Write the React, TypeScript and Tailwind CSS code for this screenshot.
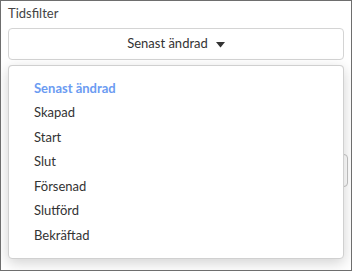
import React from 'react';

const options = ['Senast ändrad', 'Skapad', 'Start', 'Slut', 'Försenad', 'Slutförd', 'Bekräftad'];

export default function App() {
  const selected = 'Senast ändrad';

  return (
    <div className="w-[352px] h-[271px] bg-white border border-[#6e6e6e] overflow-hidden font-['Lato',sans-serif]">
      <div className="relative h-full px-[7px] pt-[4px]">
        {/* Formulär bakom menyn */}
        <label className="block text-[13px] leading-[16px] text-[#444]">Tidsfilter</label>
        <button className="mt-[7px] w-full h-[32px] rounded-[4px] border border-[#d4d4d4] bg-white flex items-center justify-center gap-[8px] text-[13px] text-[#333]">
          Senast ändrad
          <svg width="9" height="6" viewBox="0 0 9 6" className="mt-[1px]">
            <path d="M0 0h9L4.5 5.5z" fill="#333" />
          </svg>
        </button>
        <div className="mt-[5px] h-[32px] rounded-[4px] border border-[#d4d4d4]" />
        <div className="mt-[57px] mr-[-4px] h-[33px] rounded-[4px] border border-[#c4c4c4]" />
        <div className="mt-[20px] h-[10px] w-[20px] border-l border-[#aaa]" />

        {/* Dropdown-meny */}
        <div className="absolute left-[7px] right-[7px] top-[64px] rounded-[4px] border border-[#d0d0d0] bg-white py-[10px] shadow-[0_4px_14px_rgba(0,0,0,0.18)]">
          <ul>
            {options.map((o) => (
              <li
                key={o}
                className={`h-[24.5px] flex items-center pl-[25px] text-[13px] ${
                  o === selected ? 'text-[#6b9bf2] font-bold' : 'text-[#333]'
                }`}
              >
                {o}
              </li>
            ))}
          </ul>
        </div>
      </div>
    </div>
  );
}
